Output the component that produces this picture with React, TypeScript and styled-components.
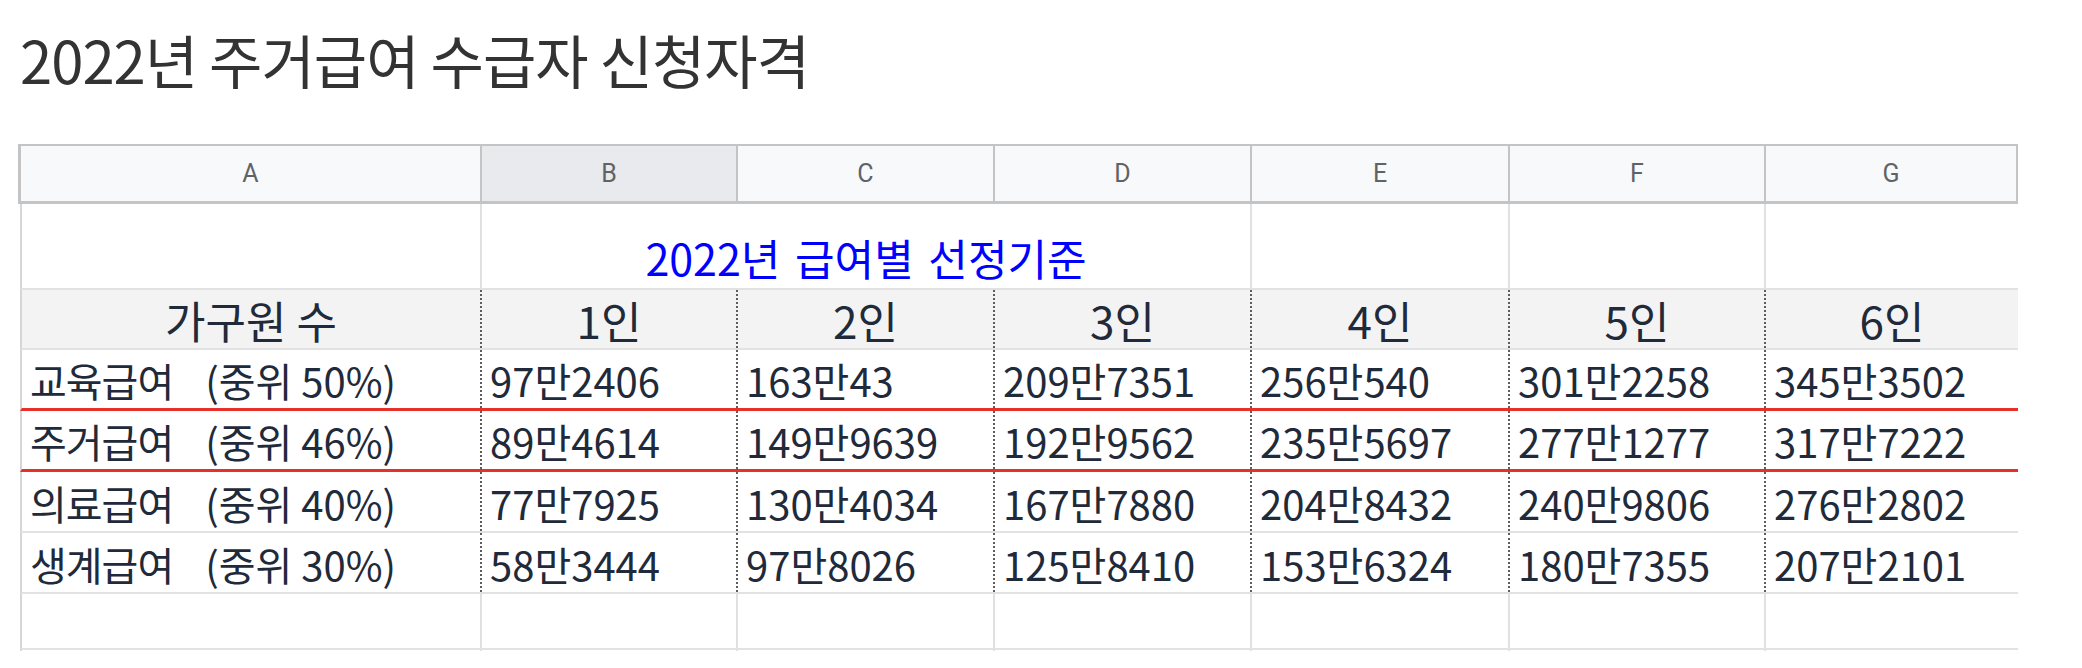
import styled, {createGlobalStyle} from "styled-components";

const GlobalStyle = createGlobalStyle`
  body {
    margin: 0;
    background: #ffffff;
  }
`

const Page = styled.div`
  width: 2082px;
  height: 668px;
  overflow: hidden;
  font-family: "Noto Sans CJK KR", "Noto Sans", sans-serif;
`

const Title = styled.h1`
  margin: 0;
  padding: 25px 0 0 20px;
  height: 118px;
  box-sizing: border-box;
  font-size: 58px;
  font-weight: 400;
  line-height: 1.2;
  letter-spacing: -1px;
  color: #333333;
`

const Sheet = styled.div`
  margin-left: 18px;
  width: 2000px;
  height: 507px;
  overflow: hidden;
  box-sizing: border-box;
  margin-top: 26px;
`

const COLS = "256px 257px 257px 258px 256px 1fr"

const Row = styled.div<{ $height: number; $bottom: string; $header?: boolean; $bg?: string }>`
  display: grid;
  grid-template-columns: ${props => props.$header ? "461px" : "460px"} ${COLS};
  height: ${props => props.$height}px;
  box-sizing: border-box;
  border-left: ${props => props.$header ? "3px solid #c4c4c4" : "2px solid #d6d6d6"};
  margin-left: ${props => props.$header ? "0" : "2px"};
  border-top: ${props => props.$header ? "2px solid #c4c4c4" : "none"};
  border-bottom: ${props => props.$bottom};
  background: ${props => props.$bg || "#ffffff"};
`

const HeadCell = styled.div<{ $active?: boolean }>`
  display: flex;
  align-items: center;
  justify-content: center;
  box-sizing: border-box;
  border-right: 2px solid #c4c4c4;
  background: ${props => props.$active ? "#e8eaed" : "#f8f9fa"};
  font-family: Roboto, "Liberation Sans", sans-serif;
  font-size: 25px;
  color: #5f6368;
`

type Divider = "dot" | "solid" | "none"

const Cell = styled.div<{ $divider: Divider; $align?: string; $span?: number; $size?: number }>`
  display: flex;
  align-items: center;
  justify-content: ${props => props.$align || "flex-start"};
  box-sizing: border-box;
  padding: 2px 8px 0;
  grid-column: ${props => props.$span ? `span ${props.$span}` : "auto"};
  border-right: ${props =>
    props.$divider === "dot" ? "2px dotted #5c5c5c" :
    props.$divider === "solid" ? "2px solid #e0e0e0" : "none"};
  font-size: ${props => props.$size || 40}px;
  line-height: 1.15;
  color: #1f2a3a;
  white-space: nowrap;
`

const Caption = styled(Cell)`
  align-items: flex-end;
  padding-bottom: 6px;
  color: #0000ff;
  word-spacing: 5px;
`

const Name = styled.span`
  letter-spacing: -1px;
`

const Note = styled.span`
  margin-left: 32px;
`

const GRAY = "2px solid #e2e2e2"
const RED = "3px solid #e8302a"

const letters = ["A", "B", "C", "D", "E", "F", "G"]
const sizes = ["1인", "2인", "3인", "4인", "5인", "6인"]

const rows = [
    {name: "교육급여", note: "(중위 50%)", values: ["97만2406", "163만43", "209만7351", "256만540", "301만2258", "345만3502"], bottom: RED},
    {name: "주거급여", note: "(중위 46%)", values: ["89만4614", "149만9639", "192만9562", "235만5697", "277만1277", "317만7222"], bottom: RED},
    {name: "의료급여", note: "(중위 40%)", values: ["77만7925", "130만4034", "167만7880", "204만8432", "240만9806", "276만2802"], bottom: GRAY},
    {name: "생계급여", note: "(중위 30%)", values: ["58만3444", "97만8026", "125만8410", "153만6324", "180만7355", "207만2101"], bottom: GRAY},
]

function App() {
    return (
        <Page>
            <GlobalStyle/>
            <Title>2022년 주거급여 수급자 신청자격</Title>
            <Sheet>
                <Row $header $height={60} $bottom="3px solid #c4c4c4">
                    {letters.map(l => <HeadCell key={l} $active={l === "B"}>{l}</HeadCell>)}
                </Row>
                <Row $height={86} $bottom={GRAY}>
                    <Cell $divider="solid"/>
                    <Caption $divider="solid" $span={3} $align="center" $size={43}>2022년 급여별 선정기준</Caption>
                    <Cell $divider="solid"/>
                    <Cell $divider="solid"/>
                    <Cell $divider="none"/>
                </Row>
                <Row $height={60} $bottom={GRAY} $bg="#f3f3f3">
                    <Cell $divider="dot" $align="center" $size={44}>가구원 수</Cell>
                    {sizes.map((s, i) => <Cell key={s} $divider={i < 5 ? "dot" : "none"} $align="center" $size={44}>{s}</Cell>)}
                </Row>
                {rows.map(row =>
                    <Row key={row.name} $height={61} $bottom={row.bottom}>
                        <Cell $divider="dot"><Name>{row.name}</Name><Note>{row.note}</Note></Cell>
                        {row.values.map((v, i) => <Cell key={v} $divider={i < 5 ? "dot" : "none"}>{v}</Cell>)}
                    </Row>
                )}
                <Row $height={56} $bottom={GRAY}>
                    {letters.map((l, i) => <Cell key={l} $divider={i < 6 ? "solid" : "none"}/>)}
                </Row>
                <Row $height={20} $bottom="none">
                    {letters.map((l, i) => <Cell key={l} $divider={i < 6 ? "solid" : "none"}/>)}
                </Row>
            </Sheet>
        </Page>
    )
}

export default App
